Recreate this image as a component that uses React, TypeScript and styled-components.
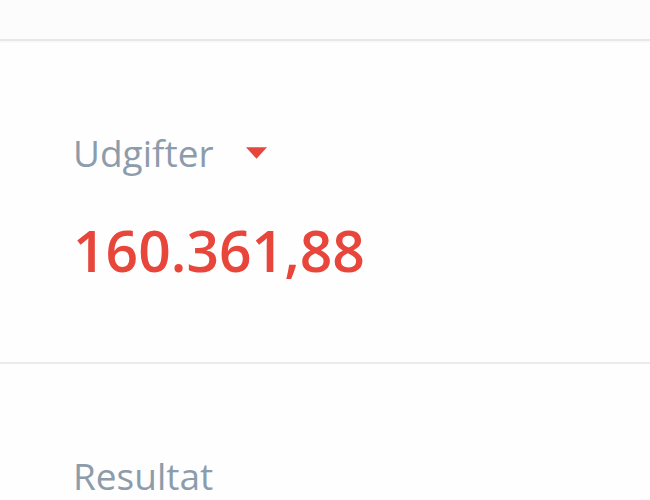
import styled, { createGlobalStyle } from "styled-components";

const GlobalStyle = createGlobalStyle`
  html, body {
    margin: 0;
    padding: 0;
    background: #fefefe;
    font-family: "Open Sans", "Liberation Sans", sans-serif;
  }
`;

type StatProps = {
  label: string;
  value?: string;
  trend?: "down" | "up";
};

const Stat = ({ label, value, trend }: StatProps) => {
  return (
    <Section>
      <LabelRow>
        <Label>{label}</Label>
        {trend && (
          <Caret viewBox="0 0 22 12" $up={trend === "up"}>
            <path d="M0 0 L22 0 L11 12 Z" />
          </Caret>
        )}
      </LabelRow>
      {value && <Value>{value}</Value>}
    </Section>
  );
};

export default function App() {
  return (
    <>
      <GlobalStyle />
      <Page>
        <TopStrip />
        <Stat label="Udgifter" value="160.361,88" trend="down" />
        <Stat label="Resultat" />
      </Page>
    </>
  );
}

const Page = styled.div`
  width: 650px;
  height: 500px;
  overflow: hidden;
  display: flex;
  flex-direction: column;
`;

const TopStrip = styled.div`
  height: 39px;
  flex-shrink: 0;
  background: #fcfcfc;
  border-bottom: 2px solid #e7e7e7;
  box-shadow: 0 1px 2px rgba(0, 0, 0, 0.04);
`;

const Section = styled.div`
  flex-shrink: 0;
  padding: 94px 73px 83px;
  border-bottom: 2px solid #ebebeb;
  &:last-child {
    border-bottom: 0;
  }
`;

const LabelRow = styled.div`
  display: flex;
  align-items: center;
  gap: 32px;
`;

const Label = styled.div`
  font-size: 37px;
  line-height: 36px;
  font-weight: 400;
  color: #8d9cab;
`;

const Caret = styled.svg<{ $up?: boolean }>`
  width: 21px;
  height: 12px;
  fill: #e8463c;
  transform: ${(p) => (p.$up ? "rotate(180deg)" : "none")};
`;

const Value = styled.div`
  margin-top: 50px;
  font-size: 57px;
  line-height: 58px;
  font-weight: 600;
  color: #e8453b;
`;
